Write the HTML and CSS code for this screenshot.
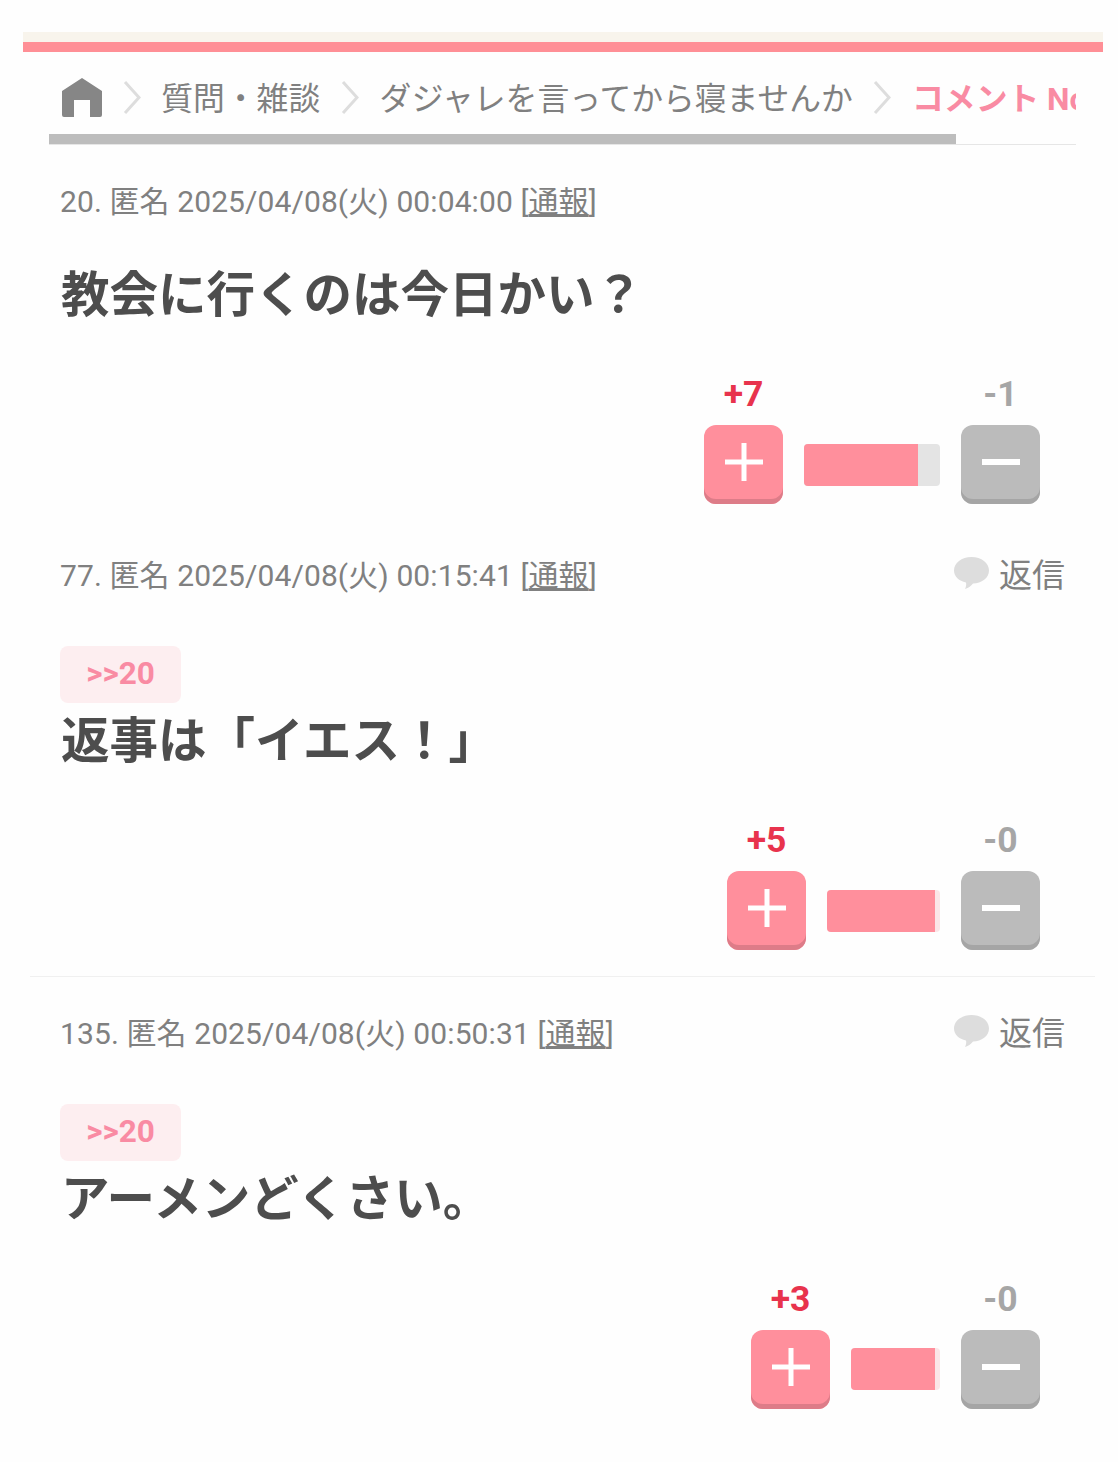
FILE: index.html
```html
<!DOCTYPE html>
<html lang="ja">
	<head>
		<meta charset="utf-8">
		<link rel="stylesheet" href="styles.css">
	</head>
	<body>

	<div class="topbar"></div>

	<div class="crumbs">
		<div class="crumb-row">
			<svg class="home" viewBox="0 0 40 39" width="40" height="39"><path d="M20 0 L40 13 V37 Q40 39 38 39 H28 V22 H12 V39 H2 Q0 39 0 37 V13 Z" fill="#868686"/></svg>
			<svg class="chev" viewBox="0 0 18 33" width="18" height="33"><path d="M2 1 L16 16.5 L2 32" fill="none" stroke="#dddddd" stroke-width="3"/></svg>
			<span>質問・雑談</span>
			<svg class="chev" viewBox="0 0 18 33" width="18" height="33"><path d="M2 1 L16 16.5 L2 32" fill="none" stroke="#dddddd" stroke-width="3"/></svg>
			<span>ダジャレを言ってから寝ませんか</span>
			<svg class="chev" viewBox="0 0 18 33" width="18" height="33"><path d="M2 1 L16 16.5 L2 32" fill="none" stroke="#dddddd" stroke-width="3"/></svg>
			<span class="current">コメント No.20</span>
		</div>
		<div class="scroll-track"><div class="scroll-thumb"></div></div>
	</div>

	<div class="comment first">
		<div class="meta">
			<div>20. 匿名 2025/04/08(火) 00:04:00 [<a href="#">通報</a>]</div>
		</div>
		<p class="body-text">教会に行くのは今日かい？</p>
		<div class="votes">
			<div class="vote">
				<div class="count plus-count">+7</div>
				<div class="btn plus">
					<svg viewBox="0 0 38 38" width="38" height="38"><path d="M16.5 0 H21.5 V16.5 H38 V21.5 H21.5 V38 H16.5 V21.5 H0 V16.5 H16.5 Z" fill="#fff"/></svg>
				</div>
			</div>
			<div class="bar" style="width: 136px"><div class="fill" style="width: 114px"></div></div>
			<div class="vote">
				<div class="count minus-count">-1</div>
				<div class="btn minus">
					<svg viewBox="0 0 38 6" width="38" height="6"><rect width="38" height="6" fill="#fff"/></svg>
				</div>
			</div>
		</div>
	</div>

	<div class="comment line">
		<div class="meta">
			<div>77. 匿名 2025/04/08(火) 00:15:41 [<a href="#">通報</a>]</div>
			<div class="reply">
				<svg viewBox="0 0 35 32" width="35" height="32"><path d="M17.5 0 C27.5 0 35 6 35 13.5 C35 21 27.5 26.5 19 26.5 C17.5 28.5 14.5 31 11 32 C12 30 12.5 27.5 12 25.5 C5 24 0 19.5 0 13.5 C0 6 7.5 0 17.5 0 Z" fill="#dddddd"/></svg>
				<span>返信</span>
			</div>
		</div>
		<div class="quote">&gt;&gt;20</div>
		<p class="body-text">返事は「イエス！」</p>
		<div class="votes">
			<div class="vote">
				<div class="count plus-count">+5</div>
				<div class="btn plus">
					<svg viewBox="0 0 38 38" width="38" height="38"><path d="M16.5 0 H21.5 V16.5 H38 V21.5 H21.5 V38 H16.5 V21.5 H0 V16.5 H16.5 Z" fill="#fff"/></svg>
				</div>
			</div>
			<div class="bar pale" style="width: 113px"><div class="fill" style="width: 108px"></div></div>
			<div class="vote">
				<div class="count minus-count">-0</div>
				<div class="btn minus">
					<svg viewBox="0 0 38 6" width="38" height="6"><rect width="38" height="6" fill="#fff"/></svg>
				</div>
			</div>
		</div>
	</div>

	<div class="comment last">
		<div class="meta">
			<div>135. 匿名 2025/04/08(火) 00:50:31 [<a href="#">通報</a>]</div>
			<div class="reply">
				<svg viewBox="0 0 35 32" width="35" height="32"><path d="M17.5 0 C27.5 0 35 6 35 13.5 C35 21 27.5 26.5 19 26.5 C17.5 28.5 14.5 31 11 32 C12 30 12.5 27.5 12 25.5 C5 24 0 19.5 0 13.5 C0 6 7.5 0 17.5 0 Z" fill="#dddddd"/></svg>
				<span>返信</span>
			</div>
		</div>
		<div class="quote">&gt;&gt;20</div>
		<p class="body-text">アーメンどくさい。</p>
		<div class="votes">
			<div class="vote">
				<div class="count plus-count">+3</div>
				<div class="btn plus">
					<svg viewBox="0 0 38 38" width="38" height="38"><path d="M16.5 0 H21.5 V16.5 H38 V21.5 H21.5 V38 H16.5 V21.5 H0 V16.5 H16.5 Z" fill="#fff"/></svg>
				</div>
			</div>
			<div class="bar pale" style="width: 89px"><div class="fill" style="width: 84px"></div></div>
			<div class="vote">
				<div class="count minus-count">-0</div>
				<div class="btn minus">
					<svg viewBox="0 0 38 6" width="38" height="6"><rect width="38" height="6" fill="#fff"/></svg>
				</div>
			</div>
		</div>
	</div>

	</body>
</html>
```

FILE: styles.css
```css
html {
	overflow: hidden;
}

body {
	margin: 0;
	font-family: Roboto, "Noto Sans CJK JP", sans-serif;
	background-color: #fefefe;
	color: #808080;
}

.topbar {
	margin: 32px 15px 0 23px;
	height: 10px;
	background-color: #f8f4ec;
	border-bottom: 10px solid #ff8f96;
}

.crumbs {
	margin-left: 49px;
	width: 1027px;
	overflow: hidden;
}

.crumb-row {
	display: flex;
	align-items: center;
	gap: 20.6px;
	padding: 26px 0 17px 13px;
	height: 39px;
	font-size: 31.8px;
	white-space: nowrap;
}
.crumb-row svg {
	flex: none;
}
.crumb-row span {
	flex: none;
	margin-top: -4px;
}
.crumb-row .current {
	color: #f98ba3;
	font-weight: bold;
}

.scroll-track {
	height: 11px;
	border-bottom: 1px solid #e6e6e6;
	box-sizing: border-box;
}
.scroll-thumb {
	width: 907px;
	height: 10px;
	background-color: #bdbdbd;
}

.comment {
	margin: 0 23px 0 30px;
	padding: 36px 30px 26px;
}
.comment.first {
	padding-bottom: 15px;
}
.comment.first .body-text {
	margin-top: 37px;
}
.comment.line {
	border-bottom: 1px solid #f0f0f0;
}
.comment.last .votes {
	margin-top: 45px;
}
.comment.last .bar {
	margin-bottom: 19px;
}

.meta {
	display: flex;
	justify-content: space-between;
	align-items: center;
	height: 40px;
	padding-bottom: 4px;
	box-sizing: border-box;
	font-size: 30px;
	letter-spacing: 0.1px;
	white-space: nowrap;
}
.meta a {
	color: #808080;
}

.reply {
	display: flex;
	align-items: center;
	gap: 10px;
	font-size: 33px;
	letter-spacing: 0;
}

.quote {
	margin-top: 51px;
	width: 121px;
	height: 57px;
	line-height: 55px;
	text-align: center;
	border-radius: 8px;
	background-color: #fdeef0;
	color: #f98ba3;
	font-size: 31.5px;
	font-weight: bold;
}

.body-text {
	margin: 1px 0 0;
	padding: 2px 0 0 1px;
	box-sizing: border-box;
	height: 72px;
	line-height: 72px;
	font-size: 48.5px;
	font-weight: bold;
	color: #4d4d4d;
}

.votes {
	display: flex;
	justify-content: flex-end;
	align-items: flex-end;
	gap: 21px;
	margin: 44px 25px 0 0;
}

.count {
	height: 40px;
	line-height: 40px;
	margin-bottom: 11px;
	text-align: center;
	font-size: 35.5px;
	font-weight: bold;
}
.plus-count {
	color: #e8334d;
}
.minus-count {
	color: #a6a6a6;
}

.btn {
	display: flex;
	align-items: center;
	justify-content: center;
	width: 79px;
	height: 79px;
	padding-bottom: 5px;
	box-sizing: border-box;
	border-radius: 12px;
}
.btn.plus {
	background-color: #ff8f9c;
	box-shadow: inset 0 -5px 0 #dd7c88;
}
.btn.minus {
	background-color: #bbbbbb;
	box-shadow: inset 0 -5px 0 #a5a5a5;
}

.bar {
	height: 42px;
	margin-bottom: 18px;
	border-radius: 4px;
	background-color: #e4e4e4;
	overflow: hidden;
}
.bar.pale {
	background-color: #fbe6e8;
}
.fill {
	height: 100%;
	background-color: #ff8f9c;
}
```
